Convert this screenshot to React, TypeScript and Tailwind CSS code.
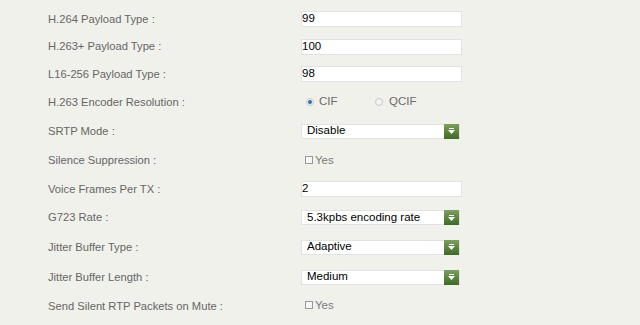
import React from "react";

type Row =
  | { label: string; h: string; kind: "text"; value: string }
  | { label: string; h: string; kind: "select"; value: string }
  | { label: string; h: string; kind: "check" }
  | { label: string; h: string; kind: "radio" };

const rows: Row[] = [
  { label: "H.264 Payload Type :", h: "h-[28px]", kind: "text", value: "99" },
  { label: "H.263+ Payload Type :", h: "h-[27px]", kind: "text", value: "100" },
  { label: "L16-256 Payload Type :", h: "h-[28px]", kind: "text", value: "98" },
  { label: "H.263 Encoder Resolution :", h: "h-[28px]", kind: "radio" },
  { label: "SRTP Mode :", h: "h-[30px]", kind: "select", value: "Disable" },
  { label: "Silence Suppression :", h: "h-[29px]", kind: "check" },
  { label: "Voice Frames Per TX :", h: "h-[28px]", kind: "text", value: "2" },
  { label: "G723 Rate :", h: "h-[29px]", kind: "select", value: "5.3kpbs encoding rate" },
  { label: "Jitter Buffer Type :", h: "h-[30px]", kind: "select", value: "Adaptive" },
  { label: "Jitter Buffer Length :", h: "h-[30px]", kind: "select", value: "Medium" },
  { label: "Send Silent RTP Packets on Mute :", h: "h-[28px]", kind: "check" },
];

function Radio({ on }: { on?: boolean }) {
  return (
    <span className="w-[8px] h-[8px] rounded-full border border-[#c8c8c8] bg-[#f4f4f4] flex items-center justify-center">
      {on && <span className="w-[4px] h-[4px] rounded-full bg-[#2f6ea8]" />}
    </span>
  );
}

function Field({ row }: { row: Row }) {
  if (row.kind === "text") {
    return (
      <div className="w-[161px] h-[16px] bg-white border border-[#e2e2e2] flex items-center text-[11.5px] text-black">
        {row.value}
      </div>
    );
  }
  if (row.kind === "select") {
    return (
      <div className="w-[159px] h-[15px] bg-white border border-[#e2e2e2] flex items-center text-[11.5px] text-black">
        <span className="flex-1 pl-[5px]">{row.value}</span>
        <span className="w-[15px] h-[15px] bg-gradient-to-b from-[#7aa25a] to-[#3e6a28] flex flex-col items-center justify-center">
          <span className="w-[5px] h-[1px] bg-white mb-[1px]" />
          <svg width="7" height="4" viewBox="0 0 7 4">
            <path d="M0 0 L7 0 L3.5 4 Z" fill="#ffffff" />
          </svg>
        </span>
      </div>
    );
  }
  if (row.kind === "check") {
    return (
      <div className="flex items-center pl-[4px] text-[11.5px] text-[#7a7a7a]">
        <span className="w-[8px] h-[8px] border border-[#9a9a9a] bg-[#f6f6f6] mr-[2px] mt-[-2px]" />
        Yes
      </div>
    );
  }
  return (
    <div className="flex items-center pl-[5px] text-[11.5px] text-[#6a6a6a]">
      <Radio on />
      <span className="ml-[5px] w-[56px]">CIF</span>
      <Radio />
      <span className="ml-[6px]">QCIF</span>
    </div>
  );
}

export default function App() {
  return (
    <div
      className="w-[640px] h-[325px] bg-[#f1f1eb] pt-[5px] overflow-hidden"
      style={{ fontFamily: '"Liberation Sans", Arial, sans-serif' }}
    >
      {rows.map((row) => (
        <div key={row.label} className={`flex items-center ${row.h}`}>
          <div className="w-[301px] pl-[48px] text-[11.2px] text-[#666666]">{row.label}</div>
          <Field row={row} />
        </div>
      ))}
    </div>
  );
}
